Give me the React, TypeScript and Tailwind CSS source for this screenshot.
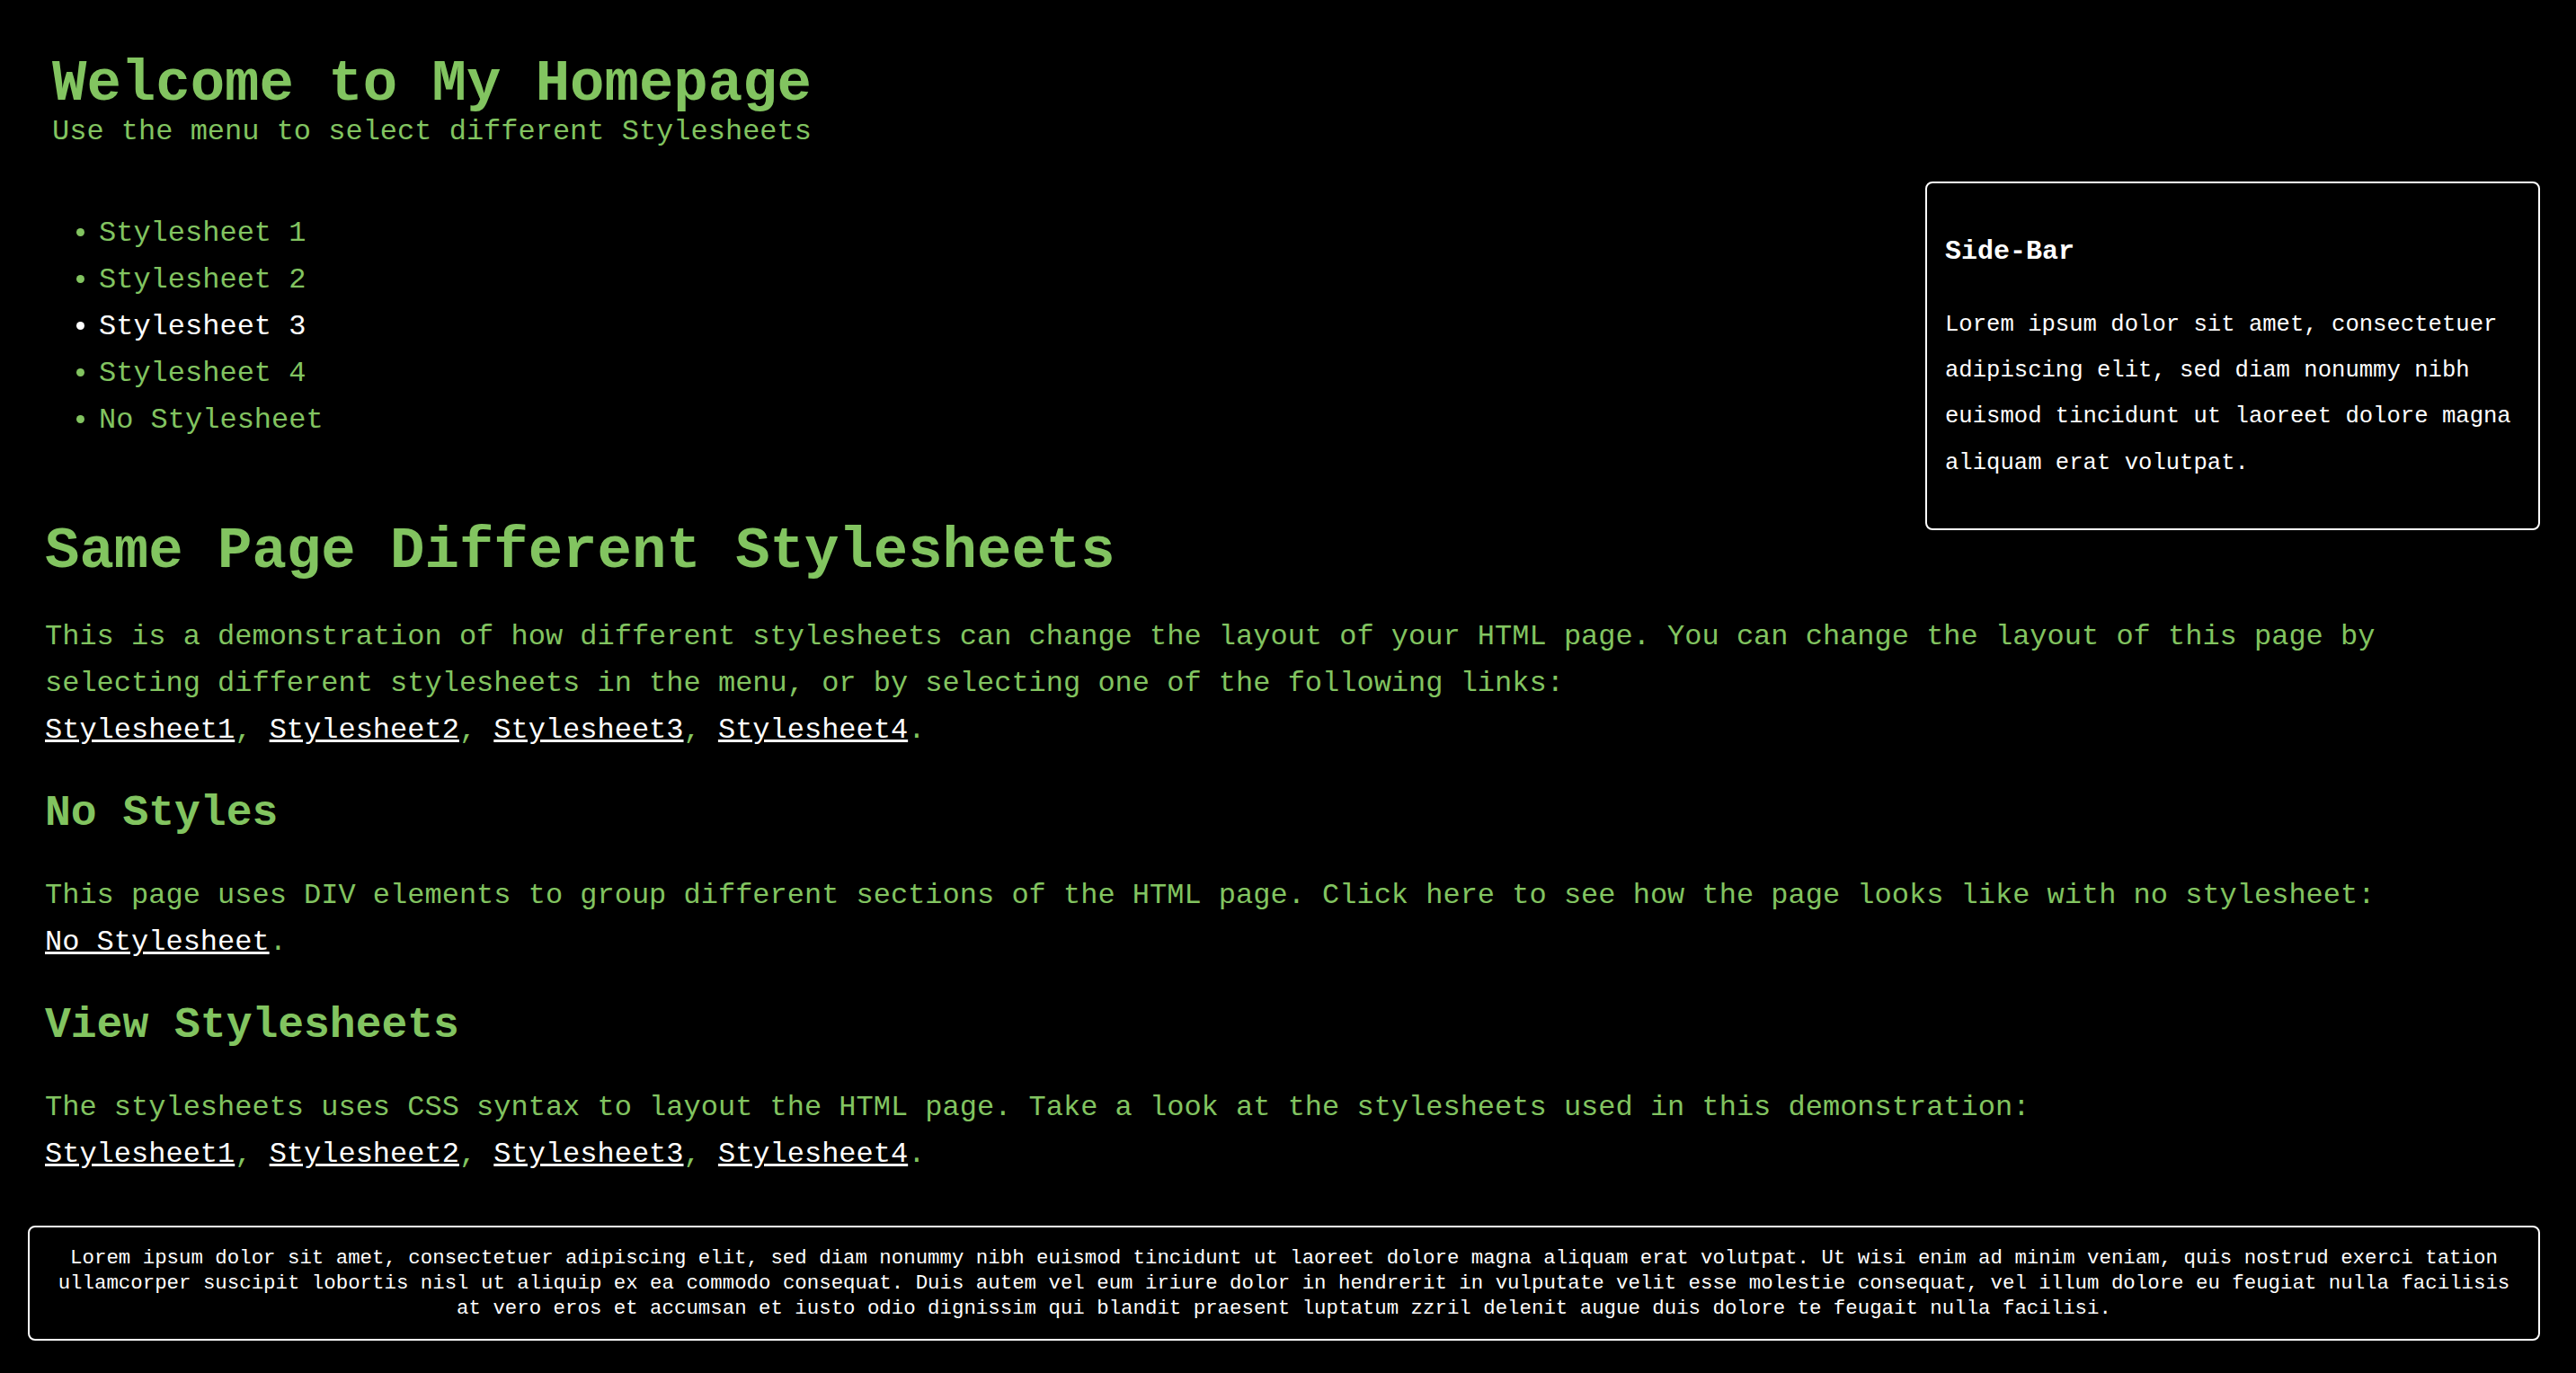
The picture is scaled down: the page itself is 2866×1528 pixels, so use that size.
import React from "react";

const menu = [
  { label: "Stylesheet 1", active: false },
  { label: "Stylesheet 2", active: false },
  { label: "Stylesheet 3", active: true },
  { label: "Stylesheet 4", active: false },
  { label: "No Stylesheet", active: false },
];

function SheetLinks() {
  return (
    <>
      <a href="#" className="text-white underline">Stylesheet1</a>,{" "}
      <a href="#" className="text-white underline">Stylesheet2</a>,{" "}
      <a href="#" className="text-white underline">Stylesheet3</a>,{" "}
      <a href="#" className="text-white underline">Stylesheet4</a>.
    </>
  );
}

export default function App() {
  return (
    <div className="min-h-screen bg-black pl-[31px] pr-[40px] pt-[58px] pb-[36px] font-['Liberation_Mono','Courier_New',monospace] text-[32px] text-[#82c460]">
      {/* Header */}
      <div className="pl-[27px]">
        <h1 className="text-[64px] font-bold leading-[72px]">Welcome to My Homepage</h1>
        <div className="leading-[34px]">Use the menu to select different Stylesheets</div>
      </div>

      {/* Side bar */}
      <div className="float-right mt-[38px] w-[684px] rounded-[8px] border-2 border-white px-[20px] pt-[59px] pb-[47px] text-white">
        <h3 className="text-[30px] font-bold leading-[34px]">Side-Bar</h3>
        <p className="mt-[39px] text-[25.6px] leading-[51.2px]">
          Lorem ipsum dolor sit amet, consectetuer adipiscing elit, sed diam nonummy nibh euismod tincidunt ut laoreet dolore magna aliquam erat volutpat.
        </p>
      </div>

      {/* Menu */}
      <ul className="mt-[70px] list-disc pl-[79px] leading-[52px]">
        {menu.map((m) => (
          <li key={m.label} className={m.active ? "text-white" : "text-[#82c460]"}>
            <a href="#">{m.label}</a>
          </li>
        ))}
      </ul>

      {/* Main content */}
      <div className="pl-[19px]">
        <h1 className="mt-[84px] text-[64px] font-bold leading-[72px]">Same Page Different Stylesheets</h1>
        <p className="mt-[33px] leading-[52px]">
          This is a demonstration of how different stylesheets can change the layout of your HTML page. You can change the layout of this page by selecting different stylesheets in the menu, or by selecting one of the following links:
          <br />
          <SheetLinks />
        </p>

        <h2 className="mt-[39px] text-[48px] font-bold leading-[54px]">No Styles</h2>
        <p className="mt-[39px] leading-[52px]">
          This page uses DIV elements to group different sections of the HTML page. Click here to see how the page looks like with no stylesheet:
          <br />
          <a href="#" className="text-white underline">No Stylesheet</a>.
        </p>

        <h2 className="mt-[39px] text-[48px] font-bold leading-[54px]">View Stylesheets</h2>
        <p className="mt-[39px] leading-[52px]">
          The stylesheets uses CSS syntax to layout the HTML page. Take a look at the stylesheets used in this demonstration:
          <br />
          <SheetLinks />
        </p>
      </div>

      {/* Footer */}
      <div className="mt-[53px] rounded-[8px] border-2 border-white px-[20px] py-[20px] text-center text-[22.4px] leading-[28px] text-white">
        Lorem ipsum dolor sit amet, consectetuer adipiscing elit, sed diam nonummy nibh euismod tincidunt ut laoreet dolore magna aliquam erat volutpat. Ut wisi enim ad minim veniam, quis nostrud exerci tation ullamcorper suscipit lobortis nisl ut aliquip ex ea commodo consequat. Duis autem vel eum iriure dolor in hendrerit in vulputate velit esse molestie consequat, vel illum dolore eu feugiat nulla facilisis at vero eros et accumsan et iusto odio dignissim qui blandit praesent luptatum zzril delenit augue duis dolore te feugait nulla facilisi.
      </div>
    </div>
  );
}
